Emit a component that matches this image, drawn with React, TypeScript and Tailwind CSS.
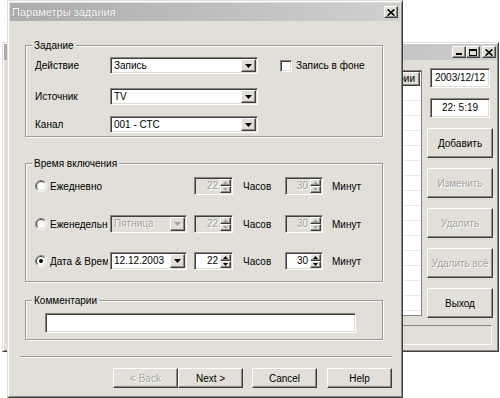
import React from "react";

const sunken =
  "border border-t-[#878680] border-l-[#878680] border-r-white border-b-white shadow-[inset_1px_1px_0_#3f3f3f,inset_-1px_-1px_0_#dedcd4]";
const raised =
  "border border-t-white border-l-white border-r-[#3f3f3f] border-b-[#3f3f3f] shadow-[inset_-1px_-1px_0_#8a8983] bg-[#e1dfd7]";
const etched = "border border-[#9a9993] shadow-[inset_1px_1px_0_#fff,1px_1px_0_#fff]";
const grayText = "text-[#a3a29c] [text-shadow:1px_1px_0_#fff]";

const Tri = ({ up, small, disabled }: { up?: boolean; small?: boolean; disabled?: boolean }) => {
  const w = small ? 5 : 7;
  const h = small ? 3 : 4;
  return (
    <svg width={w} height={h} viewBox={`0 0 ${w} ${h}`}>
      <path d={up ? `M0 ${h}H${w}L${w / 2} 0z` : `M0 0H${w}L${w / 2} ${h}z`} fill={disabled ? "#a3a29c" : "#000"} />
    </svg>
  );
};

const CloseGlyph = () => (
  <svg width="8" height="7" viewBox="0 0 8 7">
    <path d="M0.6 0.4L7.4 6.6M7.4 0.4L0.6 6.6" stroke="#000" strokeWidth="1.6" />
  </svg>
);

const Combo = ({ value, className, disabled }: { value: string; className: string; disabled?: boolean }) => (
  <div className={`${sunken} ${disabled ? `bg-[#e1dfd7] ${grayText}` : "bg-white"} ${className} p-[1px] flex items-center`}>
    <span className="flex-1 pl-[2px] whitespace-nowrap overflow-hidden leading-none">{value}</span>
    <div className={`${raised} w-[15px] h-full flex items-center justify-center`}>
      <Tri disabled={disabled} />
    </div>
  </div>
);

const Spin = ({ value, className, disabled }: { value: string; className: string; disabled?: boolean }) => (
  <div className={`${sunken} ${disabled ? `bg-[#e1dfd7] ${grayText}` : "bg-white"} ${className} h-[18px] p-[1px] flex items-center`}>
    <span className="flex-1 text-right pr-[2px] leading-none">{value}</span>
    <div className="w-[11px] h-full flex flex-col">
      <div className={`${raised} flex-1 flex items-center justify-center`}>
        <Tri up small disabled={disabled} />
      </div>
      <div className={`${raised} flex-1 flex items-center justify-center`}>
        <Tri small disabled={disabled} />
      </div>
    </div>
  </div>
);

const Radio = ({ checked }: { checked?: boolean }) => (
  <svg width="12" height="12" viewBox="0 0 12 12">
    <circle cx="6" cy="6" r="5" fill="#fff" />
    <path d="M2.1 9.9A5.5 5.5 0 0 1 9.9 2.1" stroke="#878680" fill="none" />
    <path d="M9.9 2.1A5.5 5.5 0 0 1 2.1 9.9" stroke="#fff" fill="none" />
    <path d="M2.8 9.2A4.5 4.5 0 0 1 9.2 2.8" stroke="#3f3f3f" fill="none" />
    <path d="M9.2 2.8A4.5 4.5 0 0 1 2.8 9.2" stroke="#dedcd4" fill="none" />
    {checked && <circle cx="6" cy="6" r="2" fill="#000" />}
  </svg>
);

const Legend = ({ children }: { children: React.ReactNode }) => (
  <span className="absolute left-[6px] top-[-7px] px-[2px] bg-[#e1dfd7] leading-[13px]">{children}</span>
);

const TimeRow = ({
  label,
  checked,
  combo,
  hours,
  mins,
  disabled,
  className,
}: {
  label: string;
  checked?: boolean;
  combo?: React.ReactNode;
  hours: string;
  mins: string;
  disabled?: boolean;
  className: string;
}) => (
  <div className={`flex items-center h-[18px] ${className}`}>
    <Radio checked={checked} />
    <span className="ml-[3px] w-[58px] mr-[2px] whitespace-nowrap overflow-hidden">{label}</span>
    <div className="w-[77px] h-[18px]">{combo}</div>
    <Spin value={hours} className="ml-[7px] w-[39px]" disabled={disabled} />
    <span className="ml-[10px] w-[42px]">Часов</span>
    <Spin value={mins} className="w-[38px]" disabled={disabled} />
    <span className="ml-[9px]">Минут</span>
  </div>
);

const BackWindow = () => {
  const rows = Array.from({ length: 15 });
  return (
    <div className="absolute left-[2px] top-[42px] w-[497px] h-[310px] bg-[#e1dfd7] border border-t-[#e1dfd7] border-l-[#e1dfd7] border-r-[#3f3f3f] border-b-[#3f3f3f] shadow-[inset_1px_1px_0_#fff,inset_-1px_-1px_0_#8a8983] p-[1px] flex flex-col">
      <div className="h-[16px] bg-linear-to-r from-[#a9a9a9] to-[#cdcdcd] flex items-center justify-end pr-[1px]">
        <div className={`${raised} w-[14px] h-[12px] flex items-end justify-center pb-[2px]`}>
          <div className="w-[6px] h-[2px] bg-black" />
        </div>
        <div className={`${raised} w-[14px] h-[12px] flex items-center justify-center`}>
          <div className="w-[8px] h-[7px] border border-black border-t-2" />
        </div>
        <div className={`${raised} ml-[2px] w-[14px] h-[12px] flex items-center justify-center`}>
          <CloseGlyph />
        </div>
      </div>
      <div className="flex mt-[8px]">
        <div className="flex-1 ml-[4px] mt-[2px] h-[246px] bg-white border border-[#878680] shadow-[inset_1px_1px_0_#3f3f3f] overflow-hidden">
          <div className="h-[14px] flex justify-end mt-[1px] mr-[1px]">
            <div className={`${raised} h-[14px] flex items-center pl-[4px] pr-[4px] leading-none`}>Комментарии</div>
          </div>
          {rows.map((_, i) => (
            <div key={i} className="h-[15px] border-b border-[#e8e8e8]" />
          ))}
        </div>
        <div className="w-[66px] ml-[5px] mr-[4px] flex flex-col">
          <div className={`${sunken} bg-white mx-[3px] h-[20px] flex items-center justify-center leading-none`}>2003/12/12</div>
          <div className={`${sunken} bg-white mx-[3px] mt-[10px] h-[20px] flex items-center justify-center leading-none`}>22: 5:19</div>
          <div className={`${raised} mt-[10px] h-[30px] flex items-center justify-center`}>Добавить</div>
          <div className={`${raised} mt-[10px] h-[30px] flex items-center justify-center ${grayText}`}>Изменить</div>
          <div className={`${raised} mt-[10px] h-[30px] flex items-center justify-center ${grayText}`}>Удалить</div>
          <div className={`${raised} mt-[10px] h-[30px] flex items-center justify-center ${grayText}`}>Удалить всё</div>
          <div className={`${raised} mt-[10px] h-[30px] flex items-center justify-center`}>Выход</div>
        </div>
      </div>
      <div className="mt-[7px] ml-[4px] mr-[5px] h-[20px] border border-t-[#878680] border-l-[#878680] border-r-white border-b-white" />
    </div>
  );
};

const Dialog = () => (
  <div className="absolute left-[7px] top-0 w-[396px] h-[398px] bg-[#e1dfd7] border border-t-[#e1dfd7] border-l-[#e1dfd7] border-r-[#3f3f3f] border-b-[#3f3f3f] shadow-[inset_1px_1px_0_#fff,inset_-1px_-1px_0_#8a8983] p-[2px] flex flex-col">
    <div className="h-[18px] bg-linear-to-r from-[#acacac] to-[#d0d0d0] flex items-center justify-between pl-[2px] pr-[2px]">
      <span className="text-[11px] text-white leading-none [text-shadow:0_0_1px_#777]">Параметры задания</span>
      <div className={`${raised} w-[14px] h-[12px] flex items-center justify-center`}>
        <CloseGlyph />
      </div>
    </div>

    <div className={`relative ${etched} ml-[15px] mt-[24px] w-[358px] h-[92px] pt-[11px] pl-[9px]`}>
      <Legend>Задание</Legend>
      <div className="flex items-center h-[17px]">
        <span className="w-[75px]">Действие</span>
        <Combo value="Запись" className="w-[148px] h-[17px]" />
        <div className={`${sunken} bg-white ml-[22px] w-[12px] h-[12px]`} />
        <span className="ml-[4px]">Запись в фоне</span>
      </div>
      <div className="flex items-center h-[17px] mt-[14px]">
        <span className="w-[75px]">Источник</span>
        <Combo value="TV" className="w-[148px] h-[17px]" />
      </div>
      <div className="flex items-center h-[17px] mt-[11px]">
        <span className="w-[75px]">Канал</span>
        <Combo value="001 - СТС" className="w-[148px] h-[17px]" />
      </div>
    </div>

    <div className={`relative ${etched} ml-[15px] mt-[26px] w-[358px] h-[119px] pt-[13px] pl-[9px]`}>
      <Legend>Время включения</Legend>
      <TimeRow label="Ежедневно" hours="22" mins="30" disabled className="" />
      <TimeRow
        label="Еженедельно"
        hours="22"
        mins="30"
        disabled
        className="mt-[20px]"
        combo={<Combo value="Пятница" className="w-[77px] h-[18px]" disabled />}
      />
      <TimeRow
        label="Дата & Время"
        checked
        hours="22"
        mins="30"
        className="mt-[19px]"
        combo={<Combo value="12.12.2003" className="w-[77px] h-[18px]" />}
      />
    </div>

    <div className={`relative ${etched} ml-[15px] mt-[18px] w-[358px] h-[40px] pt-[12px] pl-[19px]`}>
      <Legend>Комментарии</Legend>
      <div className={`${sunken} bg-white w-[311px] h-[20px]`} />
    </div>

    <div className="ml-[10px] mt-[16px] w-[372px] h-[2px] border-t border-t-[#9a9993] border-b border-b-white" />

    <div className="flex ml-[103px] mt-[10px]">
      <div className={`${raised} w-[65px] h-[20px] flex items-center justify-center ${grayText}`}>&lt; Back</div>
      <div className={`${raised} w-[65px] h-[20px] flex items-center justify-center`}>Next &gt;</div>
      <div className={`${raised} ml-[9px] w-[65px] h-[20px] flex items-center justify-center`}>Cancel</div>
      <div className={`${raised} ml-[10px] w-[65px] h-[20px] flex items-center justify-center`}>Help</div>
    </div>
  </div>
);

export default function App() {
  return (
    <div className="relative w-[500px] h-[398px] overflow-hidden bg-white font-['Liberation_Sans',Arial,sans-serif] text-[10px] text-black">
      <BackWindow />
      <Dialog />
    </div>
  );
}
